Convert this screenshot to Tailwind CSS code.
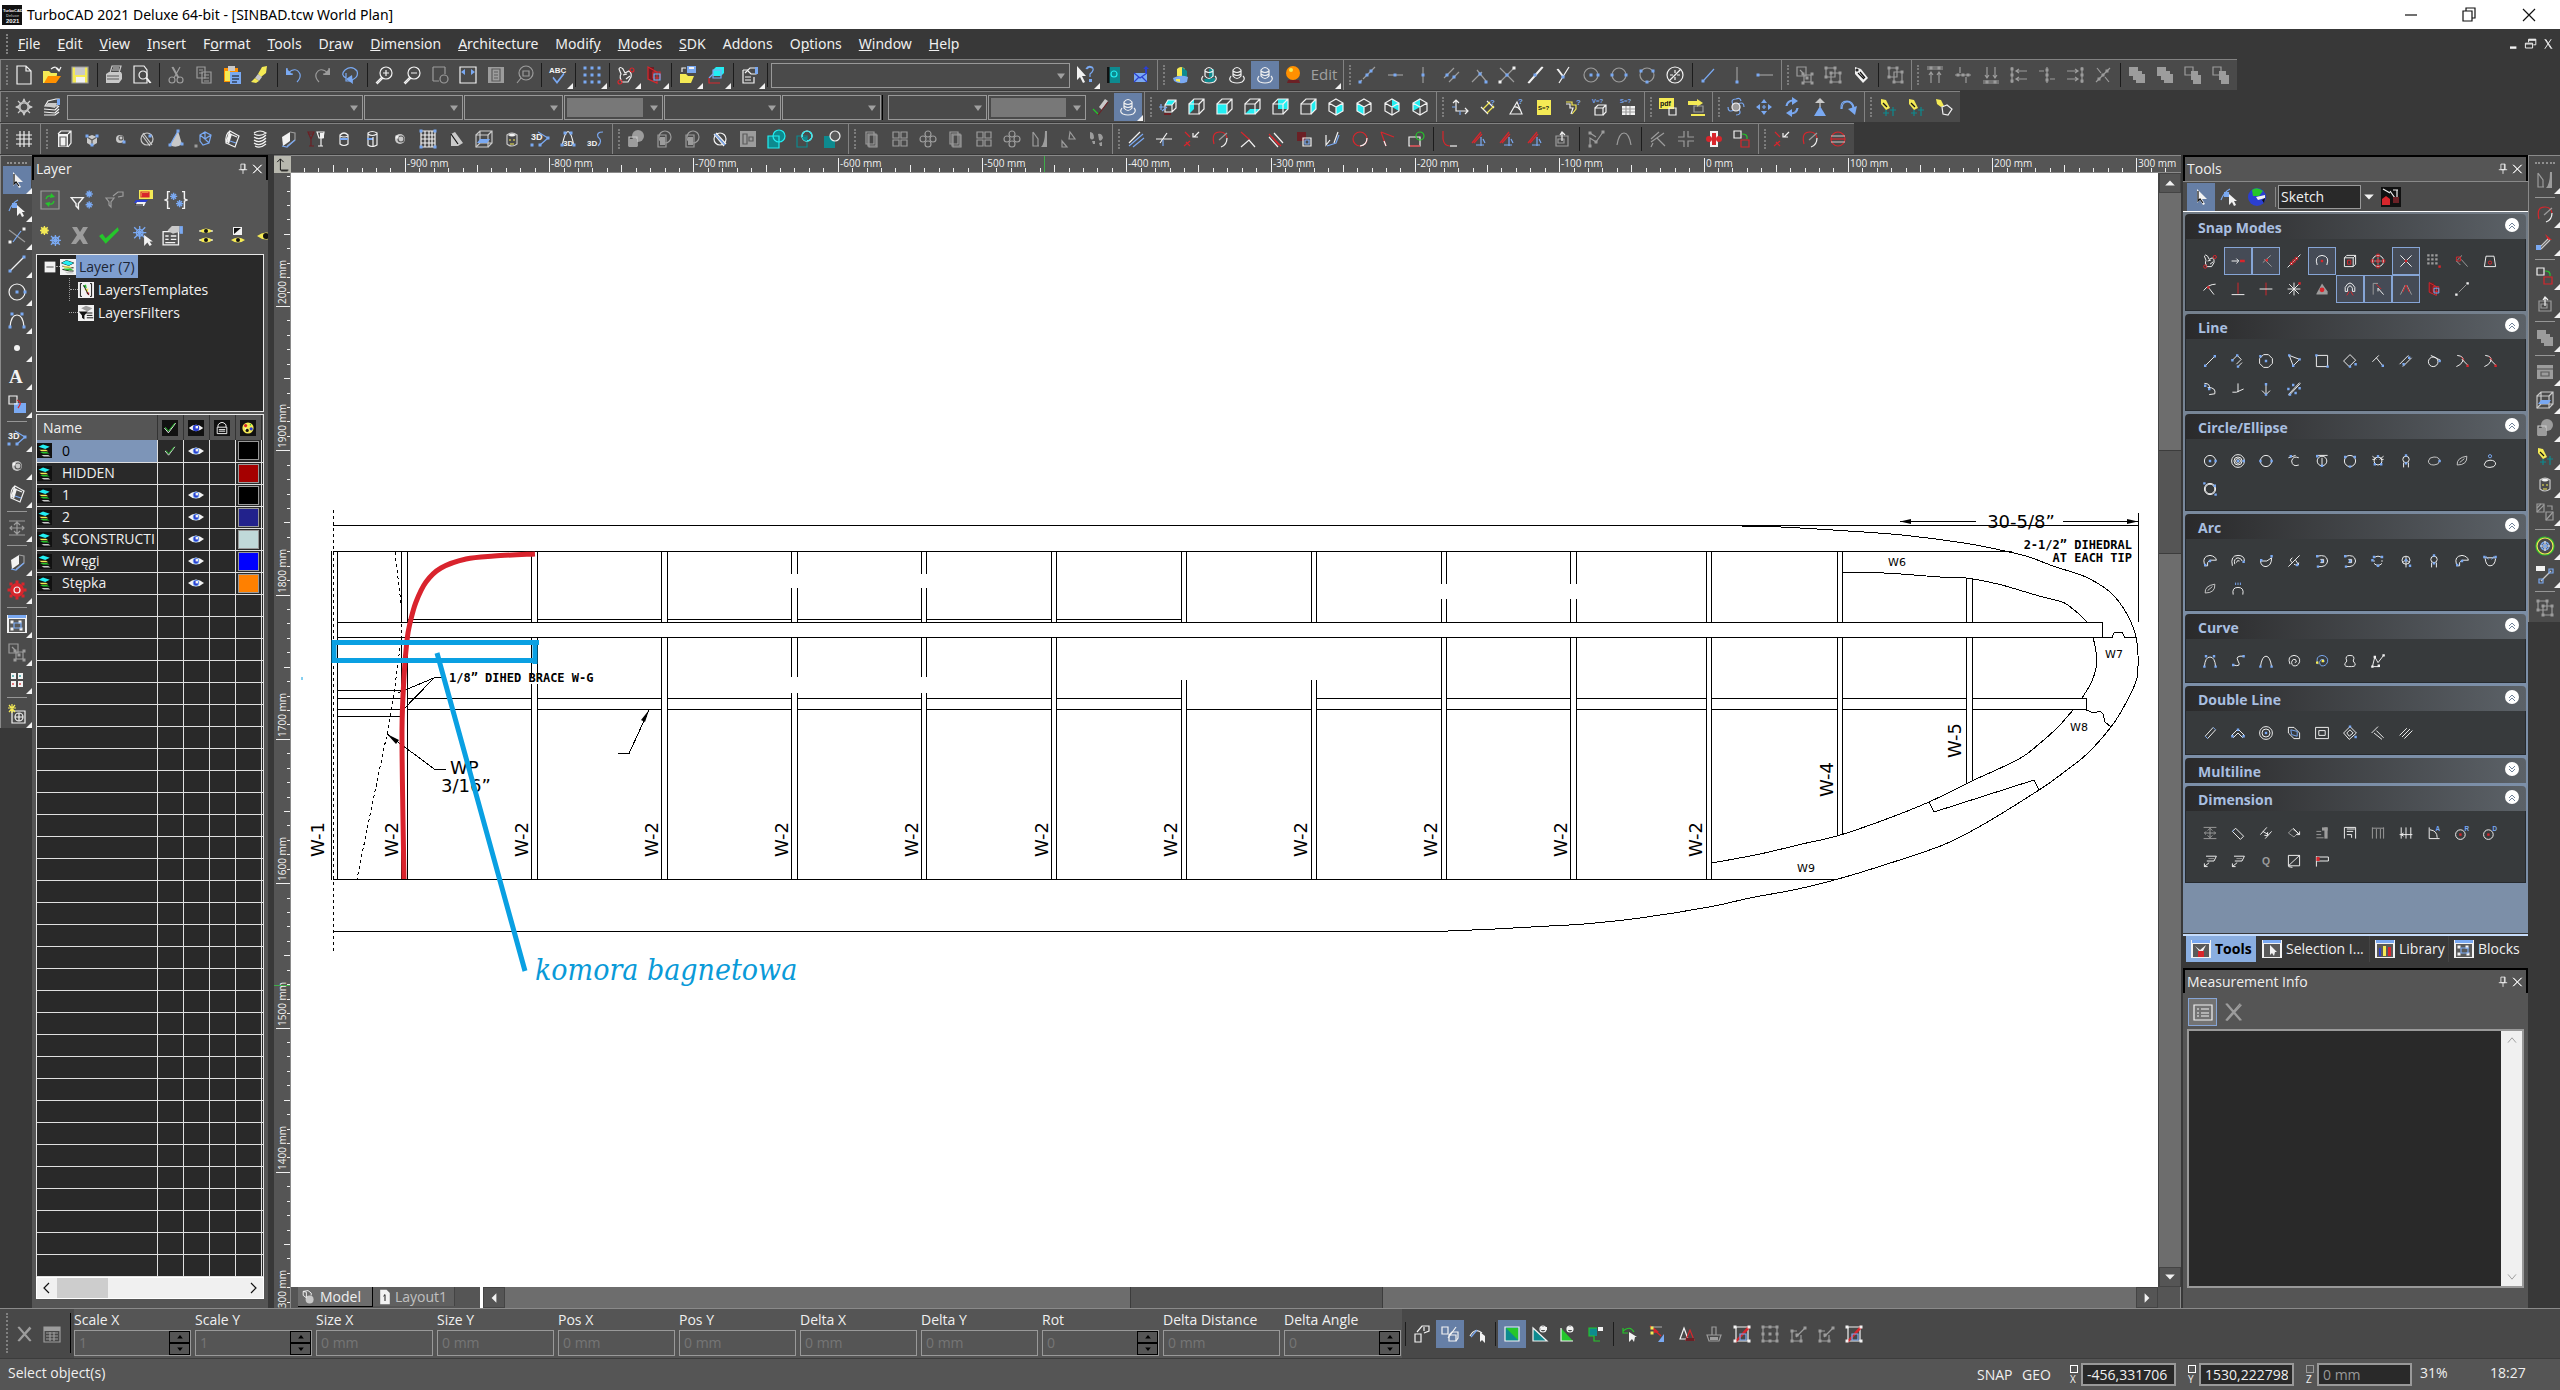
<!DOCTYPE html>
<html lang="en">
  <head>
    <meta charset="UTF-8" />
    <meta name="viewport" content="width=device-width, initial-scale=1.0" />
    <title>TurboCAD 2021 Deluxe 64-bit - [SINBAD.tcw World Plan]</title>
    <script src="https://cdn.jsdelivr.net/npm/@tailwindcss/browser@4"></script>
  </head>
  <body
    class="flex h-screen flex-col overflow-hidden bg-[#383838] font-['Open_Sans','Noto_Sans',sans-serif] text-sm text-[#f0f0f0]"
  >
    <!-- Title bar -->
    <header class="flex h-[29px] shrink-0 items-center bg-white pl-0.5 text-black">
      <svg data-icon="app" viewBox="0 0 20 20" class="size-5"></svg>
      <h1 class="pl-[5px] font-['Noto_Sans',sans-serif] text-[14px]">TurboCAD 2021 Deluxe 64-bit - [SINBAD.tcw World Plan]</h1>
      <div class="ml-auto flex">
        <button aria-label="Minimize" class="flex w-[58px] justify-center"><svg data-icon="wmin" viewBox="0 0 20 20" class="size-5"></svg></button>
        <button aria-label="Restore" class="flex w-[58px] justify-center"><svg data-icon="wres" viewBox="0 0 20 20" class="size-5"></svg></button>
        <button aria-label="Close" class="flex w-[62px] justify-center"><svg data-icon="wclose" viewBox="0 0 20 20" class="size-5"></svg></button>
      </div>
    </header>

    <!-- Menu -->
    <nav class="flex h-[30px] shrink-0 items-center">
      <span class="ml-1.5 mr-2.5 h-5 border-l-2 border-dotted border-[#808080]"></span>
      <div id="menu" class="flex gap-[17px] font-['Noto_Sans',sans-serif] text-[14px]">
        <button><u>F</u>ile</button>
        <button><u>E</u>dit</button>
        <button><u>V</u>iew</button>
        <button><u>I</u>nsert</button>
        <button>F<u>o</u>rmat</button>
        <button><u>T</u>ools</button>
        <button>D<u>r</u>aw</button>
        <button><u>D</u>imension</button>
        <button><u>A</u>rchitecture</button>
        <button>Modif<u>y</u></button>
        <button><u>M</u>odes</button>
        <button><u>S</u>DK</button>
        <button>Addons</button>
        <button>O<u>p</u>tions</button>
        <button><u>W</u>indow</button>
        <button><u>H</u>elp</button>
      </div>
      <div class="ml-auto flex gap-px pr-1">
        <button aria-label="Minimize drawing"><svg data-icon="mmin" viewBox="0 0 20 20" class="size-4"></svg></button>
        <button aria-label="Restore drawing"><svg data-icon="mres" viewBox="0 0 20 20" class="size-4"></svg></button>
        <button aria-label="Close drawing"><svg data-icon="mclose" viewBox="0 0 20 20" class="size-4"></svg></button>
      </div>
    </nav>

    <!-- Toolbars -->
    <div class="flex h-8 shrink-0">
      <div data-bar>
        <div data-icons="new open save | print preview | cut copy paste brush | undo redo rot | zin zout zwin ext page zprint | abc^ | snapgrid^ | hand^ redcube^ | fobj^ fcube^ | props^ |"></div>
        <div data-combo="Selection" class="relative mx-px h-[25px] w-[299px]"></div>
        <div data-icons="help^ book mail"></div>
      </div>
      <div data-bar>
        <div data-icons="shadeY shadeT shadeW shadeW! ball"></div>
        <button class="relative h-7 w-[34px] text-[15px] text-[#a0a0a0]">
          Edit<svg data-icon="fly" viewBox="0 0 20 20" class="absolute right-0 bottom-0 size-1.5"></svg>
        </button>
      </div>
      <div data-bar><div data-icons="sEnd sHor sVer sPar sPerp sInt sMid sNear sCen sQuad sTan sNone | sA sB sC"></div></div>
      <div data-bar><div data-icons="grp ungrp tag | selgrp"></div></div>
      <div data-bar><div data-icons="alT alM alB alL alC alR alD | ord1 ord1 ord2 ord2"></div></div>
    </div>
    <div class="flex h-8 shrink-0">
      <div data-bar>
        <div data-icons="gear layers"></div>
        <div class="flex gap-px pl-px">
          <div data-combo="Layer" class="relative h-[25px] w-[296px]"></div>
          <div data-combo="Style" class="relative h-[25px] w-[99px]"></div>
          <div data-combo="Font" class="relative h-[25px] w-[99px]"></div>
          <div data-combo="Color" data-fill class="relative h-[25px] w-[99px]"></div>
          <div data-combo="Pattern" class="relative h-[25px] w-[117px]"></div>
          <div data-combo="Width" class="relative h-[25px] w-[99px]"></div>
          <span class="w-[5px] border-l border-black"></span>
          <div data-combo="Brush" class="relative h-[25px] w-[99px]"></div>
          <div data-combo="Brush color" data-fill class="relative h-[25px] w-[98px]"></div>
        </div>
        <div data-icons="pen shadeW!^"></div>
      </div>
      <div data-bar><div data-icons="vAxis vLeft vFront vBot vBack vRight iso1 iso2 iso3 iso4"></div></div>
      <div data-bar><div data-icons="mCoord mLen mAng mArea mPath mVol mSurf"></div></div>
      <div data-bar><div data-icons="pdf pdf2"></div></div>
      <div data-bar><div data-icons="orbit pan spin cone turn"></div></div>
      <div data-bar><div data-icons="tagY tagY tagZ"></div></div>
    </div>
    <div class="flex h-8 shrink-0">
      <div data-bar><div data-icons="hash"></div></div>
      <div data-bar><div data-icons="box pbox sphere disk conic poly tube spring slab glass cyl cylt ball3 mesh wedge wcube face t3d t3a t3s"></div></div>
      <div data-bar><div data-icons="un1 un2 un2 slice blank bAdd bInt bSub"></div></div>
      <div data-bar><div data-icons="cp1 cp2 cp3 cp1 cp2 cp3 mir tri feet"></div></div>
      <div data-bar><div data-icons="e1 e2 e3 e4 e5 e6 e7 e8 e9 e10 e11 | e12 e13 e13 e13 e14 | e15 e16 | e17 e18 e19 e20"></div></div>
      <div data-bar><div data-icons="e3 e4 e21"></div></div>
    </div>

    <main class="flex min-h-0 flex-1">
      <!-- Drawing tools -->
      <div class="flex w-8 shrink-0 flex-col items-center self-start border-l border-t border-[#8a8a8a] bg-[#4b4b4b] pt-1.5">
        <span class="mb-0.5 w-5 border-t-2 border-dotted border-[#909090]"></span>
        <div data-icons="sel!^ node^ tInt^ tLine^ tCirc^ tCurve^ tDot^ tText^ tObj^ | t3d^ ball3^ tube^ | tDim^ | slab^ redgear^ | selwin^ grp^ tiles^ | newvp^" data-vertical></div>
      </div>

      <!-- Layer panel -->
      <aside class="mr-1.5 flex w-[236px] shrink-0 flex-col bg-[#555]">
        <div class="flex h-[25px] shrink-0 items-center border-2 border-b-0 border-black px-0.5">
          <h2>Layer</h2>
          <button aria-label="Pin" class="ml-auto"><svg data-icon="pin" viewBox="0 0 20 20" class="size-3.5"></svg></button>
          <button aria-label="Close panel"><svg data-icon="px" viewBox="0 0 20 20" class="size-3.5"></svg></button>
        </div>
        <div class="flex h-[39px] shrink-0 items-center gap-2.5 pl-2">
          <button aria-label="Refresh"><svg data-icon="lRef" viewBox="0 0 20 20" class="size-5"></svg></button>
          <button aria-label="New filter"><svg data-icon="lFil" viewBox="0 0 20 20" class="size-6"></svg></button>
          <button aria-label="Edit filter"><svg data-icon="lFilG" viewBox="0 0 20 20" class="size-5"></svg></button>
          <button aria-label="Layer stack"><svg data-icon="lStack" viewBox="0 0 20 20" class="size-5"></svg></button>
          <button aria-label="Template"><svg data-icon="lTpl" viewBox="0 0 20 20" class="size-6"></svg></button>
        </div>
        <div class="mb-px flex h-[34px] shrink-0 items-center gap-2 overflow-hidden pl-2">
          <button class="shrink-0" aria-label="New layer"><svg data-icon="lNew" viewBox="0 0 20 20" class="size-[22px]"></svg></button>
          <button class="shrink-0" aria-label="Delete layer"><svg data-icon="lDel" viewBox="0 0 20 20" class="size-5"></svg></button>
          <button class="shrink-0" aria-label="Set active"><svg data-icon="lOk" viewBox="0 0 20 20" class="size-[22px]"></svg></button>
          <button class="ml-1 shrink-0" aria-label="Select by layer"><svg data-icon="lSel" viewBox="0 0 20 20" class="size-[22px]"></svg></button>
          <button class="shrink-0" aria-label="Layer properties"><svg data-icon="lProp" viewBox="0 0 20 20" class="size-[22px]"></svg></button>
          <button class="ml-1 shrink-0" aria-label="Show all"><svg data-icon="lEye2" viewBox="0 0 20 20" class="size-5"></svg></button>
          <button class="ml-1 shrink-0" aria-label="Invert"><svg data-icon="lEyeB" viewBox="0 0 20 20" class="size-5"></svg></button>
          <button class="shrink-0" aria-label="Hide"><svg data-icon="lEye1" viewBox="0 0 20 20" class="size-5"></svg></button>
        </div>
        <div class="mx-1 h-[158px] shrink-0 border border-[#e8e8e8] bg-[#292929]">
          <ul class="leading-[23px]">
            <li class="flex items-center pl-[7px]">
              <svg data-icon="minus" viewBox="0 0 20 20" class="size-3"></svg>
              <span class="w-1 border-t border-dotted border-[#aaa]"></span>
              <svg data-icon="stackW" viewBox="0 0 20 20" class="size-4"></svg>
              <span class="bg-[#7f9fd0] px-[3px] text-[#1d2635]">Layer (7)</span>
            </li>
            <li class="ml-8 flex items-center border-l border-dotted border-[#999]">
              <span class="w-2 border-t border-dotted border-[#aaa]"></span>
              <svg data-icon="tplW" viewBox="0 0 20 20" class="size-4"></svg><span class="pl-1">LayersTemplates</span>
            </li>
            <li class="ml-8 flex items-center">
              <span class="w-[9px] border-t border-dotted border-[#aaa]"></span>
              <svg data-icon="filW" viewBox="0 0 20 20" class="size-4"></svg><span class="pl-1">LayersFilters</span>
            </li>
          </ul>
        </div>
        <div class="mx-1 mt-0.5 flex min-h-0 flex-1 flex-col overflow-hidden border border-b-0 border-[#e8e8e8] bg-[#292929]">
          <table class="w-full table-fixed border-collapse">
            <thead>
              <tr class="h-[25px] bg-[#555]">
                <th class="w-[120px] border-r border-[#333] pl-1.5 text-left font-normal">Name</th>
                <th class="w-[26px] border-r border-[#333]"><svg data-icon="cCheck" viewBox="0 0 20 20" class="mx-auto size-4"></svg></th>
                <th class="w-[26px] border-r border-[#333]"><svg data-icon="cEye" viewBox="0 0 20 20" class="mx-auto size-4"></svg></th>
                <th class="w-[26px] border-r border-[#333]"><svg data-icon="cLock" viewBox="0 0 20 20" class="mx-auto size-4"></svg></th>
                <th class="w-[26px] border-r border-[#333]"><svg data-icon="cPal" viewBox="0 0 20 20" class="mx-auto size-4"></svg></th>
                <th></th>
              </tr>
            </thead>
            <tbody id="layers"></tbody>
          </table>
        </div>
        <div class="mx-1 mb-[9px] flex h-[22px] shrink-0 items-center border border-white bg-[#f0f0f0]">
          <button aria-label="Scroll left"><svg data-icon="chevL" viewBox="0 0 20 20" class="size-5"></svg></button>
          <span class="h-full w-[51px] bg-[#cdcdcd]"></span>
          <button aria-label="Scroll right" class="ml-auto"><svg data-icon="chevR" viewBox="0 0 20 20" class="size-5"></svg></button>
        </div>
      </aside>

      <!-- Drawing window -->
      <section class="mr-0.5 grid min-w-0 flex-1 grid-cols-[17px_minmax(0,1fr)_23px] grid-rows-[18px_minmax(0,1fr)_21px]">
        <div class="border-t border-[#777] bg-[#b8b8ae]"><svg data-icon="origin" viewBox="0 0 20 20" class="h-[17px] w-4"></svg></div>
        <svg id="rulerTop" class="col-span-2 h-full w-full border-t border-b border-t-[#8a8a8a] border-b-[#8a8a8a] bg-[#555] font-['Open_Sans',sans-serif] text-[10px]"></svg>
        <svg id="rulerLeft" class="row-span-2 h-full w-full border-r border-[#8a8a8a] bg-[#555] font-['Open_Sans',sans-serif] text-[10px]"></svg>
        <svg class="h-full w-full bg-white font-['DejaVu_Sans',sans-serif]">
          <g transform="translate(-291 -173)">
            <g fill="none" stroke="#000" shape-rendering="crispEdges">
              <!-- outline -->
              <path d="M333 525.5H2138M333 551.5H2012M333 879.5H1838M333 931.5H1448M331.5 551V880M337.5 551V880" />
              <path d="M333.5 510V952" stroke-dasharray="3 3" />
              <!-- spars -->
              <path d="M337 622.5H2102.5V637.5M337 637.5H2112L2114 633L2116 632H2122L2125 637.5H2136" />
              <path d="M407 619.5H532M537 619.5H661M667 619.5H791M797 619.5H921M926 619.5H1051M1057 619.5H1181" />
              <path d="M337 690.5H402M337 716.5H402M337 698.5H402M407 698.5H532M537 698.5H661M667 698.5H791M797 698.5H921M926 698.5H1051M1057 698.5H1181M1317 698.5H1441M1447 698.5H1570M1577 698.5H1706M1712 698.5H1837M1842 698.5H1966M1972 698.5H2086.5V709.5" />
              <path d="M337 709.5H402M407 709.5H532M537 709.5H661M667 709.5H791M797 709.5H921M926 709.5H1051M1057 709.5H1181M1187 709.5H1311M1317 709.5H1441M1447 709.5H1570M1577 709.5H1706M1712 709.5H1837M1842 709.5H1966M1972 709.5H2086" />
              <!-- ribs -->
              <path d="M401.5 551V622M407.5 551V622M401.5 637V880M407.5 637V880M531.5 551V622M537.5 551V622M531.5 637V677M537.5 637V677M531.5 684V880M537.5 684V880M661.5 551V622M667.5 551V622M661.5 637V880M667.5 637V880" />
              <path d="M791.5 551V574M797.5 551V574M791.5 588V622M797.5 588V622M791.5 637V677M797.5 637V677M791.5 693V880M797.5 693V880M921.5 551V574M926.5 551V574M921.5 588V622M926.5 588V622M921.5 637V677M926.5 637V677M921.5 693V880M926.5 693V880" />
              <path d="M1051.5 551V622M1056.5 551V622M1051.5 637V880M1056.5 637V880M1181.5 551V622M1186.5 551V622M1181.5 680V880M1186.5 680V880M1311.5 551V622M1316.5 551V622M1311.5 680V880M1316.5 680V880" />
              <path d="M1441.5 551V584M1446.5 551V584M1441.5 599V622M1446.5 599V622M1441.5 637V880M1446.5 637V880M1570.5 551V584M1576.5 551V584M1570.5 599V622M1576.5 599V622M1570.5 637V880M1576.5 637V880" />
              <path d="M1706.5 551V622M1711.5 551V622M1706.5 637V880M1711.5 637V880M1837.5 551V622M1842.5 551V622M1837.5 637V836M1842.5 637V834M1966.5 578V622M1972.5 579V622M1966.5 637V784M1972.5 637V781" />
              <!-- tip -->
              <path data-curve="1741,526 1781,527 1848,531 1902,535 1964,543 2005,551 2029,557 2053,566 2075,573 2088,578 2105,588 2115,597 2124,609 2131,622 2136,637 2138,655 2137,678 2131,693 2122,710 2111,727 2088,753 2063,773 2039,790 1984,824 1943,845 1881,866 1838,879 1798,889 1750,898 1709,907 1640,918 1584,924 1549,926 1495,929 1448,931" />
              <path data-curve="1842,573 1884,573 1940,577 1966,578 1998,584 2039,596 2062,602 2069,606 2079,614 2087,622" />
              <path data-curve="2093,637 2096,652 2096,668 2091,683 2082,698" />
              <path data-curve="2073,710 2058,727 2039,744 2019,759 1972,781 1929,802 1884,820 1837,836 1802,844 1760,854 1712,863" />
              <path d="M2086 710L2094 713L2100 711L2103 714L2105 722L2111 727M1929 802L1934 812L2034 780L2039 790" />
              <!-- dimension and leaders -->
              <path d="M2138.5 513V622M1900 521.5H1976M2063 521.5H2138" />
              <path d="M387 734L435 769.5H446M398 693L435 677.5H444M400 713L435 677M649 710L629 753.5H618" />
              <path d="M395 552L401 604V640L394 694L387 734L369 820L357 879" stroke-dasharray="3 3" />
            </g>
            <path d="M1900 521.5L1911 519V524ZM2138 521.5L2127 519V524ZM387 734L399 740L396 744ZM649 710L645 722L641 720Z" />
            <g font-size="18">
              <text x="2021" y="528" text-anchor="middle">30-5/8”</text>
              <text x="450" y="774">WP</text>
              <text x="441" y="792">3/16”</text>
              <text transform="translate(324 857) rotate(-90)">W-1</text>
              <text transform="translate(398 857) rotate(-90)">W-2</text>
              <text transform="translate(528 857) rotate(-90)">W-2</text>
              <text transform="translate(658 857) rotate(-90)">W-2</text>
              <text transform="translate(788 857) rotate(-90)">W-2</text>
              <text transform="translate(918 857) rotate(-90)">W-2</text>
              <text transform="translate(1048 857) rotate(-90)">W-2</text>
              <text transform="translate(1177 857) rotate(-90)">W-2</text>
              <text transform="translate(1307 857) rotate(-90)">W-2</text>
              <text transform="translate(1437 857) rotate(-90)">W-2</text>
              <text transform="translate(1567 857) rotate(-90)">W-2</text>
              <text transform="translate(1702 857) rotate(-90)">W-2</text>
              <text transform="translate(1833 797) rotate(-90)">W-4</text>
              <text transform="translate(1961 758) rotate(-90)">W-5</text>
            </g>
            <g font-size="11">
              <text x="1888" y="566">W6</text>
              <text x="2105" y="658">W7</text>
              <text x="2070" y="731">W8</text>
              <text x="1797" y="872">W9</text>
            </g>
            <g font-size="12" font-weight="bold" class="font-['DejaVu_Sans_Mono',monospace]">
              <text x="449" y="682">1/8” DIHED BRACE W-G</text>
              <text x="2132" y="549" text-anchor="end">2-1/2” DIHEDRAL</text>
              <text x="2132" y="562" text-anchor="end">AT EACH TIP</text>
            </g>
            <!-- hand-drawn notes -->
            <path data-curve="404,879 403,820 402,730 404,677 407,640 410,623 416,602 426,582 441,568 466,559 494,556 535,554" fill="none" stroke="#d9232d" stroke-width="5" />
            <path d="M334 640V663M332 642.5H539M332 660.5H537M535 642V664M437 653L525 971" fill="none" stroke="#0aa0e2" stroke-width="5" />
            <path d="M302 677V680" stroke="#0aa0e2" />
            <text x="535" y="980" font-size="30" font-style="italic" fill="#0a9ad8" class="font-['DejaVu_Serif_Condensed','DejaVu_Serif',serif]">komora bagnetowa</text>
          </g>
        </svg>
        <div class="flex flex-col border-l border-[#444] bg-[#6d6d6d]">
          <button aria-label="Scroll up" class="flex h-5 items-center justify-center border border-[#444] bg-[#555]"><svg data-icon="triU" viewBox="0 0 20 20" class="size-4"></svg></button>
          <span class="grow-[257]"></span>
          <span class="grow-[102] border-y border-[#3c3c3c] bg-[#555]"></span>
          <span class="grow-[714]"></span>
          <button aria-label="Scroll down" class="flex h-5 items-center justify-center border border-[#444] bg-[#555]"><svg data-icon="triD" viewBox="0 0 20 20" class="size-4"></svg></button>
        </div>
        <div class="flex bg-[#6d6d6d]">
          <div role="tablist" class="flex w-[192px] shrink-0 items-start border-r-[3px] border-white bg-[#555] pl-[7px]">
            <button role="tab" class="flex h-5 w-[75px] items-center gap-1 border-b border-r border-black bg-[#6d6d6d] pl-0.5"><svg data-icon="mdl" viewBox="0 0 20 20" class="size-4"></svg>Model</button>
            <button role="tab" class="flex h-[19px] w-[82px] items-center gap-0.5 border-r border-[#444] bg-[#606060] pl-1 text-[#c0c0c0]"><svg data-icon="lay" viewBox="0 0 20 20" class="size-4"></svg>Layout1</button>
          </div>
          <button aria-label="Scroll left" class="flex w-[22px] items-center justify-center border border-[#444] bg-[#555]"><svg data-icon="triL" viewBox="0 0 20 20" class="size-4"></svg></button>
          <span class="grow-[626]"></span>
          <span class="grow-[252] border-x border-[#3c3c3c] bg-[#555]"></span>
          <span class="grow-[754]"></span>
          <button aria-label="Scroll right" class="flex w-[22px] items-center justify-center border border-[#444] bg-[#555]"><svg data-icon="triR" viewBox="0 0 20 20" class="size-4"></svg></button>
        </div>
        <div class="border-r border-[#8a8a8a] bg-[#555]"></div>
      </section>

      <!-- Tool palette -->
      <aside class="flex w-[345px] shrink-0 flex-col">
        <div class="flex h-[26px] shrink-0 items-center border-2 border-b-0 border-black bg-[#555] px-0.5">
          <h2>Tools</h2>
          <button aria-label="Pin" class="ml-auto"><svg data-icon="pin" viewBox="0 0 20 20" class="size-3.5"></svg></button>
          <button aria-label="Close panel"><svg data-icon="px" viewBox="0 0 20 20" class="size-3.5"></svg></button>
        </div>
        <div class="flex h-[31px] shrink-0 items-center border-t border-b border-t-[#8a8a8a] border-b-white bg-[#4b4b4b] pl-1">
          <div data-icons="sel! node globe"></div>
          <span class="mr-0.5 ml-1 h-5 border-l border-[#888]"></span>
          <select id="palette" aria-label="Palette" class="h-6 w-[83px] appearance-none border border-[#999] bg-[#292929] px-0.5">
            <option>Sketch</option>
          </select>
          <svg data-icon="triD" viewBox="0 0 20 20" class="size-4"></svg>
          <button aria-label="Customize" class="ml-[3px]"><svg data-icon="swiss" viewBox="0 0 20 20" class="h-5 w-[22px]"></svg></button>
        </div>
        <div id="palettes" class="flex flex-col gap-[3px] bg-linear-to-b from-[#727b85] to-[#7c8fa8] to-60% px-0.5 pt-0.5 pb-[50px]">
          <section data-title="Snap Modes" data-tools="hand pEnd! pMid! pDiv pArc! pBox pQuad pX! pGrid pNear pFace pTan pPerp pCross pStar pTri pMag! pExt! pApp! redcube pDash"></section>
          <section data-title="Line" data-tools="l1 l2 l3 l4 l5 l6 l7 l8 l9 l10 l10 l12 l13 l14 l15"></section>
          <section data-title="Circle/Ellipse" data-tools="c1 c2 c3 c4 c5 c6 c7 c8 c9 c10 c11 c12"></section>
          <section data-title="Arc" data-tools="a1 a2 a3 a4 a5 a5 a7 a8 c8 a1 a11 c10 a13"></section>
          <section data-title="Curve" data-tools="tCurve u2 u3 u4 u5 u6 u7"></section>
          <section data-title="Double Line" data-tools="d1 d2 d3 d4 d5 d6 d7 d8"></section>
          <section data-title="Multiline" data-tools=""></section>
          <section data-title="Dimension" data-tools="tDim m2 m3 m4 m5 m6 m7 m8 m9 m10 m11 m12 m12 m14 m15 m16"></section>
        </div>
        <div role="tablist" class="mt-px flex h-[34px] shrink-0 items-start border-t-2 border-[#c6dcfa] pl-[3px]">
          <button role="tab" class="flex h-[26px] w-[70px] items-center gap-1 bg-[#8aaee0] pl-[5px] font-bold text-black"><svg data-icon="tabT" viewBox="0 0 20 20" class="size-5"></svg>Tools</button>
          <button role="tab" class="flex h-[26px] w-[114px] items-center gap-1 border-r border-[#444] pl-1.5"><svg data-icon="tabS" viewBox="0 0 20 20" class="size-5"></svg>Selection I...</button>
          <button role="tab" class="flex h-[26px] w-[79px] items-center gap-1 border-r border-[#444] pl-[5px]"><svg data-icon="tabL" viewBox="0 0 20 20" class="size-5"></svg>Library</button>
          <button role="tab" class="flex h-[26px] items-center gap-1 pl-[5px]"><svg data-icon="selwin" viewBox="0 0 20 20" class="size-5"></svg>Blocks</button>
        </div>
        <div class="flex min-h-0 flex-1 flex-col bg-[#555]">
          <div class="flex h-[25px] shrink-0 items-center border-2 border-b-0 border-black px-0.5">
            <h2>Measurement Info</h2>
            <button aria-label="Pin" class="ml-auto"><svg data-icon="pin" viewBox="0 0 20 20" class="size-3.5"></svg></button>
            <button aria-label="Close panel"><svg data-icon="px" viewBox="0 0 20 20" class="size-3.5"></svg></button>
          </div>
          <div class="flex h-9 shrink-0 items-center gap-1 pl-[5px] pt-0.5">
            <button aria-label="List" class="flex h-7 w-[29px] items-center justify-center border border-[#86a5d6] bg-[#737373]"><svg data-icon="list" viewBox="0 0 20 20" class="size-5"></svg></button>
            <button aria-label="Clear"><svg data-icon="xg" viewBox="0 0 20 20" class="size-6"></svg></button>
          </div>
          <div class="mx-1 mb-5 flex min-h-0 flex-1 border-2 border-[#999] bg-[#292929]">
            <div class="ml-auto flex w-[21px] flex-col items-center justify-between bg-[#f0f0f0] py-0.5">
              <svg data-icon="chevU" viewBox="0 0 20 20" class="size-4"></svg>
              <svg data-icon="chevD" viewBox="0 0 20 20" class="size-4"></svg>
            </div>
          </div>
        </div>
      </aside>

      <!-- Right toolbar -->
      <div class="flex w-8 shrink-0 flex-col items-center self-start border-l border-t border-[#8a8a8a] bg-[#4b4b4b] pt-1.5">
        <span class="mb-0.5 w-5 border-t-2 border-dotted border-[#909090]"></span>
        <div data-icons="mir^ | e4^ rScale^ | e20^ e14^ | ord1^ | rWin^ wcube^ un1^ tagY^ face^ rHatch^ | target^ rPts^ | ungrp" data-vertical></div>
      </div>
    </main>

    <!-- Inspector bar -->
    <div class="flex h-[51px] shrink-0 border-t border-b border-t-[#8a8a8a] border-b-[#3c3c3c] bg-[#484848]">
      <span class="ml-1.5 mt-1 h-10 border-l-2 border-dotted border-[#808080]"></span>
      <div class="flex items-center pl-0.5"><div data-icons="xg tbl"></div></div>
      <span class="ml-1 mr-[3px] mt-1 h-10 border-l border-black"></span>
      <div id="fields" class="flex gap-1 bg-[#555] pr-px pt-px"></div>
      <div class="flex items-center"><div data-icons="| i1 i2! i3 | i4! i5 i6 i7 | i8 i9 i10 i11 i12 i13 i14 i14 i12"></div></div>
    </div>

    <!-- Status bar -->
    <footer class="flex h-[31px] shrink-0 items-center bg-[#555] pl-2">
      <span class="pb-1">Select object(s)</span>
      <div class="ml-auto flex items-center">
        <span class="w-[45px]">SNAP</span><span class="w-12">GEO</span>
        <span class="flex w-[11px] flex-col items-start text-[10px] leading-3"><input type="checkbox" aria-label="Lock X" class="size-2 appearance-none border border-white" /><label for="px">X</label></span>
        <input id="px" value="-456,331706" class="h-[23px] w-[95px] border-2 border-[#999] bg-[#292929] px-1" />
        <span class="ml-3 flex w-[11px] flex-col items-start text-[10px] leading-3"><input type="checkbox" aria-label="Lock Y" class="size-2 appearance-none border border-white" /><label for="py">Y</label></span>
        <input id="py" value="1530,222798" class="h-[23px] w-[95px] border-2 border-[#999] bg-[#292929] px-1" />
        <span class="ml-3 flex w-[11px] flex-col items-start text-[10px] leading-3"><input type="checkbox" aria-label="Lock Z" disabled class="size-2 appearance-none border border-[#999]" /><label for="pz">Z</label></span>
        <input id="pz" value="0 mm" disabled class="h-[23px] w-[95px] border-2 border-[#999] bg-[#292929] px-1 text-[#999]" />
        <span class="w-[78px] pb-1 pl-2">31%</span>
        <span class="w-[70px] pb-1">18:27</span>
      </div>
    </footer>

    <script>
      // Icon strings: "<colour>:<path>" parts joined by ";". A capital colour fills, a small one strokes.
      // @x,y,r is a circle, #x,y,w,h a rectangle, *x,y a grip point; "<colour>~x,y,size,text" is a label.
      const COLORS = { w: "#f2f2f2", b: "#7aa9f2", r: "#d8262c", g: "#9c9c9c", k: "#111111", y: "#f4ea55", t: "#0d8a8f", c: "#22eef2", n: "#25c62b", o: "#ff9000", d: "#6b2025", s: "#c9c9c9", v: "#2b3fd0", e: "#5a5a5a" };
      const CUBE = "w:#3,7,10,10;w:M3 7L8 2H18V12L13 17M13 7L18 2";
      const HEX = "w:M10 2L17 6V14L10 18L3 14V6ZM3 6L10 10L17 6M10 10V18";
      const STACK = "C:M2 5L8 2L17 5L11 8Z;Y:M3 9H12L15 11H6Z;N:M4 12H13L17 14H8Z;S:M6 16H15L18 18H9Z";
      const ICONS = {
        app: "K:#0,0,20,20;w~1,7,4,TurboCAD;g~4,12,4,Deluxe;w~4,18,6,2021",
        wmin: "k:M4 10H16", wres: "k:#4,6,9,10;k:M7 6V3H16V13H13", wclose: "k:M4 4L16 16M16 4L4 16",
        mmin: "W:#5,13,8,3", mres: "w:#3,9,9,6;w:M3 10H12M7 8V4H16V11H13;W:#7,4,9,2", mclose: "w:M6 4L14 16M14 4L6 16M7 4L15 16",
        fly: "W:M20 0V20H0Z", pin: "w:M7 3H13V11H7ZM12 3V11M4 11H16M10 11V17", px: "w:M4 4L16 16M16 4L4 16M5 4L17 16M17 4L5 16",
        triU: "W:M4 13H16L10 7Z", triD: "W:M4 7H16L10 13Z", triL: "W:M13 4V16L7 10Z", triR: "W:M7 4V16L13 10Z",
        chevL: "k:M12 5L7 10L12 15", chevR: "k:M8 5L13 10L8 15", chevU: "g:M5 12L10 6L15 12", chevD: "g:M5 8L10 14L15 8",
        origin: "k:M8 17V3M4 7L8 3L12 7M8 17H18M9 18H17", minus: "W:#1,1,18,18;k:M4 10H16",
        new: "w:M3 1H12L17 6V19H3ZM12 1V6H17", open: "Y:M1 18V6H7L9 8H15V10L11 18Z;O:M2 18L6 11H19L14 18Z;w:M9 4Q14 0 17 5M14 3L17 6L19 2",
        save: "Y:#2,2,16,16;S:#5,2,10,8;W:#6,12,9,6;g:#2,2,16,16", print: "s:M6 8L8 1H17L15 8M9 3H15M8 5H15;S:M2 9L5 7H17L18 9V14L15 18H2Z;e:M3 11H15M3 14H15",
        preview: "w:M2 1H12L15 5V18H2Z;w:@11,10,4;w:M14 13L18 18M15 13L19 18", cut: "g:M6 2L12 13M14 2L8 13M7 2L13 13;g:@6,15,3;g:@14,15,3",
        copy: "g:#3,2,8,11;g:#8,7,9,11;g:M5 5H9M5 8H9M10 10H15M10 13H15M10 16H15", paste: "O:#2,3,14,14;S:#6,1,7,5;Y:#3,6,5,10;B:#8,7,11,12;k:M10 11H17M10 14H17M10 17H15",
        brush: "Y:M12 2L17 1L16 8L11 12L8 9Z;S:M8 9L12 12L9 16L5 13Z;Y:M1 17L5 13L9 16L6 18Z", undo: "b:M3 3V9H9M4 8Q12 1 16 9Q17 13 13 17;B:M2 3V10H9Z",
        redo: "g:M17 3V9H11M16 8Q8 1 4 9Q3 13 7 17;G:M18 3V10H11Z", rot: "b:M6 13Q0 10 5 5Q12 0 17 6Q19 12 12 15M6 8V16H13;B:M6 14L12 10L13 19Z",
        zin: "w:@12,8,6;w:M8 12L2 18M9 13L3 19M12 5V11M9 8H15", zout: "w:@12,8,6;w:M8 12L2 18M9 13L3 19M9 8H15",
        zwin: "g:M3 2H15M3 2V16M15 2V9M3 16H9;g:@14,14,4", ext: "w:#2,2,16,16;B:M3 7L7 4V10ZM17 7L13 4V10Z", page: "G:#2,2,16,16;e:#6,4,8,12;e:M8 7H12M8 10H12M8 13H12", zprint: "g:@12,8,7;g:#9,6,6,5;g:M7 13L3 18",
        abc: "w~1,8,8,ABC;b:M5 12L9 17L16 8M5 13L9 18L16 9", snapgrid: "B:*3,3*10,3*17,3*3,10*10,10*17,10*3,17*10,17*17,17",
        hand: "w:M6 17Q3 12 5 9L3 4Q4 1 7 4L9 8L13 6Q16 8 15 12L12 17ZM7 10L11 9M10 14L14 11;r:@16,5,2;r:@4,17,2", redcube: "D:#4,2,6,13;r:M4 2V14L13 18V7ZM9 7H16V13H9Z;b:#10,9,6,6",
        fobj: "Y:M2 18V9H8L10 11H16L13 18Z;B:#9,1,9,7;W:#11,2,5,2;w:M4 7V3H8", fcube: "C:M7 5L10 2H18V8L15 11H7Z;b:#7,5,8,8;b:M3 13L7 9;r:M3 13V18H14", props: "w:M3 5H8M3 5V18H14V12;w:M5 8L10 3L16 3V9L11 9L8 6M5 12H11M5 15H11;B:#15,2,3,7",
        help: "W:M2 1V15L5 12L8 18L10 17L7 11L11 11Z;b:M11 4Q13 0 17 2Q20 5 15 9V12M12 4Q14 1 17 3;B:#14,14,3,3", book: "K:#4,2,13,16;T:#6,2,11,16;c:@11,9,3;k:M6 2V18", mail: "B:#3,8,13,9;v:M3 8L9 13L16 8M3 17L8 12M16 17L11 12;V:M14 8V4H12L15 1L18 4H16V8Z",
        shadeW: "w:M6 5Q10 0 14 5V11Q10 16 6 11ZM6 6Q10 9 14 6M6 9Q10 12 14 9;w:M4 11Q1 15 5 17Q10 19 15 17Q19 14 16 11", shadeT: "T:#10,4,5,8;T:M5 14L16 13V17L6 17Z;w:M6 5Q10 0 14 5V11Q10 16 6 11ZM6 6Q10 9 14 6;w:M4 11Q1 15 5 17Q10 19 15 17Q19 14 16 11",
        shadeY: "Y:M6 4Q10 0 14 4V11H6Z;T:M11 2L16 6V12H11Z;B:M2 13Q10 9 17 12L16 17Q9 20 3 16Z;Y:M5 14H9V17L5 16Z", ball: "O:@10,8,7;D:M5 15L16 15L17 18H4Z;Y:@8,5,2",
        sEnd: "g:M6 14L18 2M3 17L5 15;B:*10,10*14,6*3,17", sHor: "g:M3 10H18;B:*10,10", sVer: "g:M10 2V18;B:*10,10", sPar: "g:M3 13L13 3M8 17L18 7;B:*6,10*13,12", sPerp: "g:M3 17L13 7M8 5L17 16;B:*11,9*17,17", sInt: "g:M3 3L17 17M17 3L3 17;B:*10,10;W:*3,17*17,3",
        sMid: "w:M3 18L17 2M4 18L18 2;B:*10,10", sNear: "w:M6 18L16 2M4 4L10 12M5 4L11 12;B:*10,12", sCen: "g:@10,10,7;B:*10,10*17,10", sQuad: "g:@10,10,7;B:*3,10*17,10", sTan: "g:@10,10,7;B:*4,6*16,6*10,17", sNone: "w:@10,10,8;w:M4 16L16 4M10 5V8M10 12V15M5 10H8M12 10H15",
        sA: "b:M5 15L15 4;B:*4,16", sB: "g:M10 2V18;B:*10,17", sC: "g:M3 10H18;B:*3,10",
        grp: "g:#2,2,9,9;g:M5 5L8 8;g:#9,10,7,7;G:*8,9*17,9*8,18*17,18*12,13", ungrp: "g:#3,3,9,9;g:#8,8,9,9;G:*3,3*12,3*3,12*8,8*17,8*8,17*17,17", tag: "W:M4 2L10 4L17 13L12 18L4 9Z;k:M7 8L13 14M9 7L14 13;k:@6,5,1", selgrp: "g:#4,3,8,9;g:#9,7,8,10;G:*4,3*12,3*4,12*9,17*17,17*17,7",
        alT: "g:M2 2H18M2 4H18M6 18V8M14 18V8M4 10L6 7L8 10M12 10L14 7L16 10;G:*6,3*14,3", alM: "g:M2 10H18M7 2V8M13 12V18;G:*5,10*10,10*15,10", alB: "g:M2 18H18M2 16H18M6 2V12M14 2V12M4 10L6 13L8 10M12 10L14 13L16 10;G:*6,17*14,17",
        alL: "g:M3 2V18M18 6H8M18 14H8M10 4L7 6L10 8M10 12L7 14L10 16;G:*3,4*3,10*3,16", alC: "g:M10 2V18M2 6H7M13 14H18;G:*10,5*10,10*10,15", alR: "g:M17 2V18M2 6H12M2 14H12M10 4L13 6L10 8M10 12L13 14L10 16;G:*17,4*17,10*17,16", alD: "g:M3 17L17 3M4 3L8 8M16 17L12 12;G:*6,14*10,10*14,6",
        ord1: "G:#2,2,9,9;G:#6,6,9,9;G:#9,9,9,9", ord2: "g:#2,2,8,8;G:#8,6,7,9;G:#10,10,8,9",
        gear: "s:@10,10,5;s:M10 2V5M10 15V18M2 10H5M15 10H18M4 4L7 7M13 13L16 16M16 4L13 7M7 13L4 16;s:@10,10,4;S:M10 1L12 5H8ZM10 19L12 15H8ZM1 10L5 8V12ZM19 10L15 8V12Z", layers: "w:M3 9L6 4L14 2H17L15 9ZM2 12L13 13L17 9M2 15L13 16L17 12M2 18L13 18L17 15;S:M3 9L6 6H15L13 11Z;B:#15,2,3,6",
        pen: "S:M9 10L15 2L18 4L12 13Z;n:M3 12L8 17;d:M8 18L18 5",
        vAxis: "C:M10 3H18L14 8H7Z;w:M7 8L10 3H18V11L14 15H7ZM14 8V15M7 8H14L18 3;b:M1 10H6M3 7V13M4 14L9 10;D:#6,16,7,2", vLeft: "C:M3 7L8 2V12L3 17Z;" + CUBE, vFront: "C:#3,7,10,10;" + CUBE, vBot: "C:M3 17L8 12H18L13 17Z;" + CUBE, vBack: "C:#8,2,10,10;" + CUBE, vRight: "C:M13 7L18 2V12L13 17Z;" + CUBE,
        iso1: "C:M10 10L17 6V14L10 18Z;" + HEX, iso2: "C:M3 6L10 10V18L3 14Z;" + HEX, iso3: "C:M10 2L17 6V14L10 10Z;" + HEX, iso4: "C:M10 2L3 6V14L10 10Z;" + HEX,
        mCoord: "w:M6 3V14H18M15 11L18 14L15 17M3 6L6 3L9 6;b:M2 10H6M10 14V18", mLen: "w:M3 10L10 17M9 4L16 11;y:M5 12L12 5M9 16L16 9;b~12,8,8,?", mAng: "w:M4 17L11 5L16 17Z;w:M8 10Q12 9 14 13;b~12,7,8,?", mArea: "Y:#3,3,14,15;k~4,13,6,S=?", mPath: "y:M4 5H10V8H14V12L10 17;w:M4 7H8V11H11L9 17;b~14,8,8,?", mVol: "b~2,6,6,V=?;w:#5,11,8,7;w:M5 11L8 8H16V15L13 18M13 11L16 8", mSurf: "b~2,6,6,S=?;W:M4 9H17V18H4Z;g:M4 12H17M4 15H17M8 9V18M12 9V18",
        pdf: "Y:#1,1,15,11;k~2,9,7,pdf;w:#11,11,7,7", pdf2: "Y:M2 4H11V2L17 6L11 10V8H2Z;g:#8,9,9,6;Y:#5,17,14,2",
        orbit: "b:M10 2Q4 2 7 8M18 10Q18 4 12 7M10 18Q16 18 13 12M2 10Q2 16 8 13M10 2Q14 0 15 4;G:@10,10,4;w:@10,10,4", pan: "B:M10 2L13 6H7ZM10 18L13 14H7ZM2 10L6 7V13ZM18 10L14 7V13Z;b:M10 8V12M8 10H12", spin: "b:M4 9Q5 3 11 3M16 11Q15 17 9 17M5 9Q6 4 11 4M15 11Q14 16 9 16;B:M10 0L16 4L10 8ZM10 12L4 16L10 20Z", cone: "B:M10 9L16 19H4Z;S:M10 1L15 6H5Z;s:M10 5V10", turn: "b:M3 12Q2 4 9 4Q15 4 16 11M4 12Q4 5 9 5Q14 5 15 11;B:M10 12L19 9L17 18Z",
        tagY: "Y:M3 2L8 3L12 11L8 13L3 7Z;k:M5 6L9 10;t:M8 13V19M5 16H11M15 10V16M12 13H18M15 16V19", tagZ: "Y:M2 2L7 3L10 9L7 10L3 7Z;w:M8 10L13 8L18 12L14 18L9 17Z",
        hash: "w:M6 2V18M10 2V18M15 2V18M2 6H18M2 10H18M2 15H18", box: "W:#4,5,10,13;e:#6,8,6,9;w:M4 5L7 2H17V14L14 18M14 5L17 2", pbox: "S:M10 6L15 8V14L10 17L5 14V8Z;e:M5 8L10 11L15 8M10 11V17;B:*5,7*15,7*10,16", sphere: "S:@10,10,4;e:@11,9,2;B:*14,13", disk: "s:@9,10,6;s:M5 4L14 16M4 6L12 17;B:*12,7",
        conic: "S:M12 2L16 15Q10 20 4 16Z;b:M12 2L4 16;B:*12,2*4,16*16,15", poly: "b:M6 6L11 3L17 6L15 14L9 16L6 12ZM11 3V10M6 6L11 10L17 6M11 10L15 14;G:*2,17", tube: "w:M8 2L17 7L13 18L4 14ZM8 2Q3 5 4 14M8 5L15 8;W:M7 4L10 5L7 15L5 13Z;b:M8 12L14 14", spring: "w:M4 4Q10 0 16 4Q10 8 4 5M4 8Q10 12 16 6M4 11Q10 15 16 9M4 14Q10 18 16 12M5 17Q10 20 16 15",
        slab: "W:M4 8L12 3V12L5 17Z;g:M12 3L17 4V11L9 17;b:M4 17L9 18L17 11", glass: "d:M2 3H8L5 10ZM5 10V17M3 17H8M2 5H8;w:M11 3H18L17 9H13ZM15 9V17M12 17H17;W:#14,4,4,5", cyl: "w:M6 6Q10 2 14 6V15Q10 18 6 15Z;w:M6 7Q10 9 14 7;B:#6,9,8,2", cylt: "w:M6 4Q10 1 15 4V16Q10 19 6 16ZM6 5Q10 8 15 5;B:#5,9,6,2;w:M11 8V18", ball3: "S:@10,10,5;e:@11,10,3;W:*7,8", mesh: "w:#3,2,14,16;w:M3 6H17M3 10H17M3 14H17M7 2V18M11 2V18M14 2V18;B:*3,2*17,2*3,18*17,18",
        wedge: "S:M5 5L9 3L17 14L12 17H5Z;k:M5 5L12 15", wcube: "s:#2,6,12,12;s:M2 6L6 2H18V14L14 18M14 6L18 2M6 2V14H18M2 18L6 14;B:M3 14L6 10H16L13 14Z", face: "s:M5 6Q10 2 15 6V15Q10 19 5 15Z;W:M6 6Q10 3 14 6Q10 9 6 6Z;y:M7 11H9M11 11H13M8 15H12",
        t3d: "w~1,11,9,3D;b:M8 3L18 9L10 16;B:*18,9*10,16*2,16", t3a: "w~5,17,8,3D;w:M4 17Q10 -12 16 17;B:*4,16*16,16*7,4*13,4", t3s: "w~1,17,8,3D;b:M17 3Q10 3 12 8Q17 12 12 17",
        un1: "G:@12,7,6;s:#3,8,8,9;G:#3,10,8,8", un2: "g:@11,8,6;g:#4,6,8,12;G:#6,8,5,8", slice: "w:@10,10,6;w:M4 5L14 17M6 4L16 15;b:M5 5L15 16", blank: "G:#2,2,16,16;e:#5,5,4,10;e:#11,8,4,4", bAdd: "T:@13,7,6;T:#2,7,11,12;c:@13,7,6;c:#2,7,11,12", bInt: "t:#3,7,10,11;w:@13,7,5;c:@13,7,5;T:M8 8H13V12Q9 12 8 8Z", bSub: "T:#2,7,11,12;E:@13,7,5;w:@13,7,5",
        cp1: "g:#4,3,8,12;g:#7,6,8,12;g:#6,5,8,12", cp2: "g:#3,3,6,6;g:#11,3,6,6;g:#3,11,6,6;g:#11,11,6,6", cp3: "g:@10,5,3;g:@5,10,3;g:@15,10,3;g:@10,15,3", mir: "g:M3 3V17H9M3 3L8 10V17;G:M17 2V18H11Q15 14 15 2Z", tri: "g:M11 10L17 10L12 3ZM4 18V12L9 18Z", feet: "G:M4 3Q8 3 8 9Q6 12 4 9ZM6 12L9 12V15H7ZM12 5Q16 4 17 9Q15 13 13 11ZM13 14L16 13V17H14Z",
        e1: "w:M3 14L14 3;b:M3 17L17 5M7 18L18 9", e2: "w:M2 10H18M6 14L13 4;b:M9 11V17", e3: "r:M3 3L8 8M4 13L8 17M2 17L8 12;w:M17 3L12 8M11 4V8H16", e4: "r:M4 15Q1 3 10 3Q16 3 17 9;w:M17 9Q17 16 11 18;g:M9 11L17 4", e5: "r:M3 3L12 11;w:M17 18L11 11L3 18", e6: "w:M3 8L12 18M8 4L17 14;r:M3 5L13 16M6 8L15 17", e7: "D:#3,3,9,9;w:#9,9,8,8;b:#11,11,4,4", e8: "w:M4 6V16L8 11M12 14L16 3;b:M5 17L14 14L17 6", e9: "r:@10,10,7;w:M10 17Q17 16 17 9", e10: "r:M3 3L16 8M3 3L8 17;w:M8 17L6 12", e11: "w:#3,8,11,9;n:@14,7,4;r:M4 17H14",
        e12: "r:M3 2V10Q4 17 10 17;w:M10 17H17", e13: "r:M4 14L13 3M6 14L14 5;b:M8 16H16M13 8V17M15 10L17 14", e14: "g:#4,7,12,10;g:#6,10,6,4;w:M10 12V4M8 6L10 3L13 6", e15: "g:M4 17V9L10 13L17 3M4 4L10 8;G:*4,17*4,4*10,13*17,3", e16: "g:M3 16Q5 4 10 4Q15 4 17 16", e17: "g:M3 10L11 3M3 13L16 4M9 9L17 17M5 14L3 18", e18: "g:M8 2V8H2M12 2V8H18M8 18V12H2M12 18V12H18", e19: "W:#6,2,8,16;R:@5,10,3;R:@15,10,3;R:#8,4,4,12", e20: "w:#2,2,7,7;r:#9,11,8,7;n:M10 5Q16 5 15 10", e21: "r:@10,10,7;s:M3 7H17M3 13H17;r:M3 10H17",
        sel: "W:M6 2V16L9 13L12 18L14 17L11 12H16Z;k:M7 4V14L9 12L12 16", node: "b:M2 13Q5 5 11 2;B:#5,5,5,5;W:M10 7V18L13 15L15 19L17 18L15 14H18Z", tInt: "g:M2 4L18 16;b:M6 16L14 5;W:*3,16*17,3", tLine: "w:M3 17L17 3;B:*3,17*17,3", tCirc: "w:@10,10,8;B:*10,10*18,10", tCurve: "w:M3 17Q4 5 10 5Q16 5 17 17;B:*3,17*17,17*5,4*15,4", tDot: "W:@10,10,3", tText: "w~2,17,19,A", tObj: "B:#7,9,12,10;w:#2,2,8,8;r:M10 6Q16 8 11 14",
        tDim: "g:M2 3H18M2 17H18M10 4V16M7 7L10 4L13 7M7 13L10 16L13 13M3 10H17M5 8L3 10L5 12M15 8L17 10L15 12", redgear: "R:@10,10,7;R:*10,2*10,18*2,10*18,10*4,4*16,4*4,16*16,16;w:@10,10,3", selwin: "W:#0,1,20,18;B:#1,1,18,3;E:#2,5,16,13;W:*5,8*13,8*5,15*14,15;b:#7,9,7,5", tiles: "W:#4,3,5,6;W:#11,3,5,6;W:#4,11,5,6;W:#11,11,5,6;t:M6 5V7M13 5V7;r:M6 13V15M13 13V15", newvp: "w:#5,7,13,12;w:@12,13,4;w:M12 9V17M8 13H16;y:M5 0V9M1 4H9M2 1L8 8M8 1L2 8",
        globe: "V:@10,10,9;N:M5 3Q10 -1 16 4L12 9L6 9Z;W:M9 10L18 8V11L11 13Z;K:M15 13L18 11L17 16Z", swiss: "K:#0,0,20,20;R:M1 18V12L5 9L9 12V18Z;w:M2 2L9 6M9 4L14 11M12 3H17M16 3V12;D:#12,10,6,6",
        lRef: "E:#1,1,18,18;g:#1,1,18,18;n:M6 9Q7 5 11 6M14 11Q13 15 9 14;N:M11 3L15 7L10 8ZM9 17L5 13L10 12Z", lFil: "w:M1 8H11L7 13V17L5 15V13Z;b:M16 2V8M13 5H19M14 3L18 7M18 3L14 7M16 11V17M13 14H19M14 12L18 16M18 12L14 16", lFilG: "g:M2 8H10L7 12V17L5 15V12ZM9 6L14 2H19V6L14 7", lStack: "Y:#5,0,14,9;r:#7,2,8,5;R:#8,3,7,4;V:M2 10H14L11 13H0ZM4 13H10V15Z;W:M3 12H12L10 16H1Z;k:M1 15H9", lTpl: "w:M5 3H3V9L1 10L3 11V17H5M15 3H17V9L19 10L17 11V17H15;b:M8 4V10M5 7H11M6 5L10 9M10 5L6 9M13 10V16M10 13H16M11 11L15 15M15 11L11 15",
        lNew: "y:M4 1V9M0 5H8M1 2L7 8M7 2L1 8;Y:@4,5,3;b:@14,14,3;b:M14 9V19M9 14H19M10 10L18 18M18 10L10 18", lDel: "G:M2 1L7 1L10 6L13 1H18L13 9L18 18H13L10 13L6 18H1L7 9Z", lOk: "N:M1 10L4 8L7 12L18 2L19 5L7 17Z", lSel: "b:@7,7,3;b:M7 1V13M1 7H13M2 2L12 12M12 2L2 12;W:M11 9V19L14 16L16 19L18 18L16 15H19Z", lProp: "w:#1,6,14,12;w:M3 10H6M3 13H6M8 10H13M8 13H13M3 16H12;S:M5 5L9 1H16V6L10 8Z;B:#16,1,3,7", lEye2: "Y:M3 5Q10 0 17 5Q10 9 3 5ZM3 14Q10 9 17 14Q10 19 3 14Z;K:@10,5,2;K:@10,14,2;w:M3 5H5M15 5H17M3 14H5M15 14H17", lEyeB: "W:#5,1,9,8;K:M6 2H13L6 8Z;Y:M3 14Q10 9 17 14Q10 19 3 14Z;K:@10,14,2", lEye1: "Y:M1 10Q10 3 19 10Q10 17 1 10Z;K:@10,10,3",
        stackW: "W:#0,0,20,20;k:M2 5L8 2L17 5L11 8ZM3 9L12 11H17M3 13L12 15H17;" + STACK, stackK: "K:#0,0,20,20;" + STACK, tplW: "W:#0,0,20,20;k:M5 2H3V18H5M15 2H17V18H15;N:M6 5L10 3L11 8Z;Y:M8 9L13 8L12 13Z;R:M10 13L14 13V17Z;k:M7 4L13 16", filW: "W:#0,0,20,20;G:M4 4L10 1L18 4L12 8Z;K:M1 8H12L8 13V18L5 16V13Z;k:M10 10H18M11 13H18M11 16H19",
        cCheck: "K:#0,0,20,20;w:M3 10L8 16L17 4;n:M4 9L8 14L16 4", check: "w:M3 10L8 16L17 4;n:M4 9L8 14L16 4", eye: "W:M0 10Q10 1 20 10Q10 19 0 10Z;B:@10,10,4;V:@10,10,3;W:*11,9", cEye: "K:#0,0,20,20;W:M1 10Q10 2 19 10Q10 18 1 10Z;V:@10,10,4;W:*11,9", cLock: "K:#0,0,20,20;w:#4,9,12,8;w:M5 9V6Q10 0 15 6V9M6 12H14M6 14H14", cPal: "K:#0,0,20,20;Y:@10,10,7;R:@7,7,2;N:@13,6,1;V:@14,11,2;K:@9,13,2;W:@7,11,1",
        pEnd: "w:M2 10H10M8 7L11 10L8 13;R:*14,10*17,10", pMid: "g:M16 3L6 12M8 8L17 17;R:*11,9", pDiv: "w:M2 18L18 2;r:*7,13*13,7*10,10", pArc: "w:M4 15Q0 4 10 3Q20 4 16 15;R:*10,10", pBox: "w:#3,6,11,11;w:M3 6L6 3H17V14L14 17M14 6L17 3;r:#7,9,4,5", pQuad: "w:@10,10,7;g:M10 3V17M3 10H17;r:*10,3*10,17*3,10*17,10*10,10", pX: "w:M3 3L17 17M17 3L3 17;R:*10,10", pGrid: "G:*3,3*8,3*13,3*3,8*8,8*13,8*3,13*8,13*13,13;R:*17,17", pNear: "g:M4 9L10 3M9 8L17 17;r:#3,5,5,5;g:M3 10L8 15", pFace: "w:M3 17L5 4H15L17 17Z;r:@10,12,2", pTan: "w:M2 12Q8 4 17 4M8 8L15 17;R:*8,8", pPerp: "r:M10 2V16;w:M2 17H18", pCross: "r:M10 2V18;w:M2 10H18", pStar: "w:M10 2V18M2 10H18M4 4L16 16M16 4L4 16;R:*17,3", pTri: "G:M3 16L10 3L17 13V17H3Z;R:@10,11,3", pMag: "w:M4 13V8Q10 -3 16 8V13H13V9Q10 3 7 9V13Z;r:M6 18L9 13M14 18L11 13", pExt: "g:M4 17V3H10;r:M8 4L14 10;w:M10 9L17 17M10 9V13", pApp: "g:M3 17L9 5M11 5L17 17;r:M6 14L10 5L14 14", pDash: "g:M6 14L15 5;W:*3,17*17,3",
        l1: "w:M4 16L16 4;B:*4,16*16,4", l2: "w:M3 9L9 3L14 8L8 14M10 17L15 12;B:*9,3*3,9*10,17", l3: "w:M7 2H13L18 7V13L13 18H7L2 13V7Z;B:*10,10*3,4", l4: "w:M4 3L17 8L9 16Z;B:*9,16*4,3*17,8", l5: "w:#3,3,14,14;B:*3,3*17,17", l6: "w:M10 2L17 9L9 17L2 10Z;B:*10,17*17,14", l7: "w:M3 11L11 3M8 6L16 16;B:*16,16", l8: "w:M2 14L13 3M6 17L17 6;B:*7,14*14,6", l9: "w:@9,11,6;w:M6 3L18 9;B:*17,10", l10: "w:M4 3Q13 4 11 10Q9 15 3 17;w:M10 8L17 15;r:M9 5L13 9;R:*17,16",
        l12: "w:M3 3Q11 3 9 10M7 8Q18 8 16 16L9 17;B:*4,6*9,10", l13: "w:M10 3V14M3 14H8L17 10", l14: "w:M10 3V16M5 12L10 17L15 12;B:*10,4*10,17", l15: "w:M3 17L17 2M4 18L18 3;B:*3,10*9,5*17,9*12,15*5,17",
        c1: "w:@10,10,7;B:*10,10*17,10", c2: "w:@10,10,8;w:@10,10,5;w:@10,10,3;B:*10,10*17,10", c3: "w:@10,10,7;B:*3,10*17,10", c4: "w:M16 6Q9 3 7 10Q8 18 16 15M3 6L12 3;B:*6,4", c5: "w:M3 3H17;w:@10,10,6;w:M10 6V16;B:*10,16*4,4", c6: "w:@10,10,7;B:*4,5*16,5*10,17", c7: "w:@10,10,5;w:M3 4L8 8M17 4L12 8M3 8H6M14 8H17;B:*6,14*14,14*10,4", c8: "w:@10,8,4;w:M7 12V18M13 12V18;B:*10,3*10,13", c9: "s:M3 10Q4 5 10 5Q17 5 17 10Q16 15 10 15Q3 15 3 10Z;B:*17,10", c10: "s:M4 15Q3 6 16 4Q17 15 4 15Z;s:M7 12L13 7", c11: "w:M3 14Q4 9 10 9Q17 9 17 14Q16 18 10 18Q3 18 3 14Z;b:@10,4,2", c12: "w:@10,10,7;w:@10,10,6;B:*3,3*16,6*17,17",
        a1: "w:M3 14Q0 4 10 3Q17 4 18 9H10L7 12V16H3;B:*10,10*4,15", a2: "w:M3 16Q0 3 10 3Q18 3 18 10M6 14Q4 7 10 6Q15 7 15 10M8 12Q9 8 12 10;B:*17,11", a3: "w:M3 10Q4 17 10 17Q17 16 17 6L11 10Z;B:*17,4*4,9", a4: "w:M3 17L17 3M8 6Q3 9 8 12M10 14Q15 17 16 12M12 9L16 15;B:*14,15", a5: "w:M4 4Q16 1 17 10Q16 18 5 17M8 8H12V12H8;B:*4,4*5,17*10,10", a7: "w:M5 6Q10 2 15 6M5 13Q10 18 15 13M5 9V11M15 9V11;B:*5,5*15,5*10,16*3,9", a8: "w:@10,9,5;w:M10 5V18M6 12L10 8L14 12;B:*10,9*15,16", a11: "w:M3 6H17M4 7Q5 16 10 16Q16 16 17 7;b:M5 4L8 8M15 4L12 8;B:*3,5*17,5", a13: "w:M4 17Q2 8 10 8Q18 8 16 17;b:M7 2V5M10 2V5M13 2V5",
        u2: "w:M4 15Q15 18 10 10Q6 3 17 4;B:*4,15*17,4", u3: "w:M3 17Q5 4 10 4Q15 4 17 17;B:*3,17*17,17", u4: "w:M5 14Q1 4 10 3Q18 4 17 11Q15 17 9 16Q5 12 9 8Q13 7 13 11L11 12", u5: "b:M5 14Q1 4 10 3Q18 4 17 11Q15 17 9 16Q5 12 9 8Q13 7 13 11;Y:*4,12*11,10", u6: "w:M6 10Q3 3 10 3Q17 3 14 10Q20 17 12 17H8Q0 17 6 10Z", u7: "w:M3 17L6 5L10 12L17 3M4 17L12 17;W:*3,17*6,5*11,16*17,3",
        d1: "w:M4 14L14 3M7 17L17 6;b:M4 14L7 17M14 3L17 6", d2: "w:M2 13L10 5L18 13M4 16L10 10L16 16;B:*10,6*3,14*17,14", d3: "w:@10,10,8;w:@10,10,5;B:*10,10", d4: "w:M3 3H10L17 10V17H10L3 10Z;b:M6 6L14 8V14L7 12Z", d5: "w:#2,3,16,14;w:#6,7,8,6", d6: "w:M10 2L18 10L9 18L2 10ZM10 6L14 10L9 14L6 10Z;B:*10,2*17,15", d7: "w:M2 10L10 2M5 10L15 18M8 7L17 16", d8: "w:M2 13L11 4M5 15L15 5M8 17L18 7",
        m2: "w:M3 8L7 4L17 14L13 18Z;b:M3 8L5 6", m3: "w:M3 12L11 3M9 17L17 8M6 8L13 12M12 9V13H8", m4: "g:M3 10L8 5L15 10L10 15Z;w:M9 4L17 12M17 8V12H13", m5: "G:#10,3,7,4;G:#13,3,4,14;g:M3 8H9M3 12H9M3 16H12", m6: "w:M3 17V3H17V17M6 8H14M6 12H12V16M6 5H16", m7: "g:M3 3V17M8 5V17M13 5V17M17 3V17M3 4H17", m8: "w:M4 3V17M10 3V17M16 3V17M2 12H18M7 10L4 12L7 14", m9: "w:M4 3V17H17M5 6Q14 7 14 16;b~12,8,8,A", m10: "w:@8,12,6;R:*8,12;b~13,7,8,R", m11: "w:@8,12,6;R:*8,12;b~13,7,8,D", m12: "w:M5 4H18L15 10H6M3 17L9 12M3 13V17H7;g:M8 7H15", m14: "g~5,15,13,Q", m15: "w:#3,3,14,13;w:M3 16L17 3M3 17L8 18", m16: "w:M3 4V17M3 5H18V10H3;R:#3,5,4,5",
        tabT: "W:#0,1,20,18;B:#1,1,18,3;E:#2,5,16,13;W:M4 7L9 11L15 6L12 12H8Z;R:#7,12,6,6", tabS: "W:#0,1,20,18;B:#1,1,18,3;E:#2,5,16,13;W:M8 6V16L10 14L12 17L13 13H15Z", tabL: "W:#0,1,20,18;B:#1,1,18,3;E:#2,5,16,13;V:#4,9,2,8;Y:#8,7,3,10;R:#13,8,3,9",
        list: "w:#1,3,18,15;w:M4 7H6M8 7H16M4 11H6M8 11H16M4 14H6M8 14H16", xg: "g:M4 3L16 17M16 3L4 17M5 3L17 17M17 4L5 17", tbl: "g:#2,3,16,15;G:#2,3,16,4;g:M4 9H16M4 12H16M4 15H16M8 8V17M12 8V17", mdl: "S:@12,13,5;w:M4 8V3L10 2L14 5V8M4 8L8 11V4L4 3", lay: "W:M4 1H12L16 5V19H4Z;k:M8 9L10 7V15",
        rScale: "R:M10 2L17 8H13Z;s:M5 15L13 7M6 17L15 8;B:#1,13,5,5", rWin: "G:#2,3,16,14;e:M2 7H18;e:#6,10,8,4", rHatch: "g:#2,2,7,8;g:M2 6L6 2M2 10L9 3;g:#11,10,7,8;g:M11 18L18 10M12 4H17V8", target: "n:@10,10,9;y:@10,10,8;b:@10,10,4;w:M10 5V15M5 10H15;b:M7 7L13 13M13 7L7 13", rPts: "W:#1,2,9,5;s:M6 17L16 7;b:#4,15,4,4;b:#14,5,4,4",
        i1: "w:#3,10,6,8;w:M5 8L10 2H17V7L12 9M12 3V7", i2: "w:#2,3,6,7;w:M8 14L16 3;w:#9,11,7,6;w:M9 11L12 8H18V14L16 17", i3: "w:M2 12Q7 3 14 9;b:M3 13L9 6;W:M12 8V18L14 16L17 19V12Z", i4: "T:#3,3,14,14;N:M4 4H16V16Z;w:#3,3,14,14", i5: "T:M3 4V17H17Z;w:M3 4V17H17Z;w:@13,5,3;W:#11,3,6,3", i6: "N:M3 4V17H15Z;w:M3 4V17H15;w:@12,5,3;W:#9,3,6,3", i7: "T:#3,4,8,8;n:M11 4H3V12H8V17H14;W:#12,3,5,4", i8: "n:M3 7Q10 1 14 8M3 4V9H8;W:M9 8V18L12 15L14 18L15 13H17Z", i9: "R:M5 3L11 8L6 9Z;r:M2 2L13 12;g:M3 3H14;B:M16 10V18H10Z;Y:*4,9*4,4", i10: "w:M4 15L8 4L12 15Z;r:M10 16L14 6L18 16Z;D:#10,14,8,3", i11: "g:M3 11H17L15 17H5ZM8 3H12V11H8Z;G:#6,13,8,3", i12: "w:#4,3,12,14;r:M3 18L17 2M4 18L18 3;b:#8,10,6,6;W:*3,3*17,3*3,17*17,17", i13: "g:#3,3,14,14;G:*3,3*10,3*17,3*3,10*10,10*17,10*3,17*10,17*17,17", i14: "g:M4 7V17H13V11M4 7H9;g:M8 13L17 4;G:*4,7*13,17*4,17*17,4*9,11",
      };

      function draw(name) {
        return (ICONS[name] || "").split(";").map((part) => {
          const color = COLORS[part[0].toLowerCase()];
          if (part[1] === "~") {
            const [x, y, size, text] = part.slice(2).split(",");
            const family = name === "tText" ? "Liberation Serif" : "Liberation Sans";
            return `<text x="${x}" y="${y}" font-size="${size}" font-weight="bold" font-family="${family}" fill="${color}">${text}</text>`;
          }
          const d = part.slice(2)
            .replace(/@(\d+),(\d+),(\d+)/g, (m, x, y, r) => `M${x - r} ${y}a${r} ${r} 0 1 0 ${2 * r} 0a${r} ${r} 0 1 0 ${-2 * r} 0`)
            .replace(/#(\d+),(\d+),(\d+),(\d+)/g, "M$1 $2h$3v$4h-$3z")
            .replace(/\*(\d+),(\d+)/g, (m, x, y) => `M${x - 1.5} ${y - 1.5}h3v3h-3z`);
          const fill = part[0] < "a";
          return `<path d="${d}" fill="${fill ? color : "none"}" ${fill ? "" : `stroke="${color}" stroke-width="1.2"`}/>`;
        }).join("");
      }

      function icon(name, cls) {
        return `<svg viewBox="0 0 20 20" class="${cls}">${draw(name)}</svg>`;
      }

      // Toolbar frames
      document.querySelectorAll("[data-bar]").forEach((bar) => {
        bar.className = "flex h-[31px] shrink-0 items-center border-l border-t border-[#828282] bg-[#4a4a4a] pr-0.5";
        bar.insertAdjacentHTML("afterbegin", '<span class="ml-[5px] mr-0.5 h-5 border-l-2 border-dotted border-[#7c7c7c]"></span>');
      });

      // Toolbar buttons: "name" plus ! for pressed and ^ for a flyout
      document.querySelectorAll("[data-icons]").forEach((box) => {
        const vertical = box.hasAttribute("data-vertical");
        box.className = vertical ? "flex flex-col" : "flex items-center";
        box.innerHTML = box.dataset.icons.trim().split(/\s+/).map((token) => {
          if (token === "|") {
            return vertical
              ? '<span class="mx-1 mt-[3px] mb-0.5 border-t border-[#969696]"></span>'
              : '<span class="ml-[3px] mr-0.5 h-6 border-l border-[#1c1c1c]"></span>';
          }
          const name = token.replace(/[!^]/g, "");
          const pressed = token.includes("!") ? "bg-[#667fa6]" : "";
          const fly = token.includes("^") ? icon("fly", "absolute -right-px bottom-0 size-1.5") : "";
          return `<button aria-label="${name}" class="relative flex size-7 shrink-0 items-center justify-center ${pressed}">${icon(name, "size-5")}${fly}</button>`;
        }).join("");
      });

      document.querySelectorAll("svg[data-icon]").forEach((svg) => {
        svg.innerHTML = draw(svg.dataset.icon);
      });

      document.querySelectorAll("[data-combo]").forEach((box) => {
        const fill = box.hasAttribute("data-fill") ? '<span class="absolute inset-y-[3px] left-[3px] right-5 bg-[#787878]"></span>' : "";
        box.innerHTML = `<select aria-label="${box.dataset.combo}" class="h-full w-full appearance-none border border-[#999] bg-[#4a4a4a]"></select>${fill}
          <svg viewBox="0 0 20 20" class="pointer-events-none absolute top-2 right-1 size-2.5"><path d="M2 5H18L10 16Z" fill="#a0a0a0"/></svg>`;
      });

      // Smooth curve through the listed points
      document.querySelectorAll("[data-curve]").forEach((path) => {
        const p = path.dataset.curve.split(" ").map((s) => s.split(",").map(Number));
        let d = `M${p[0]}`;
        for (let i = 0; i < p.length - 1; i++) {
          const [a, b, c, e] = [p[i - 1] || p[i], p[i], p[i + 1], p[i + 2] || p[i + 1]];
          d += `C${b[0] + (c[0] - a[0]) / 6} ${b[1] + (c[1] - a[1]) / 6} ${c[0] - (e[0] - b[0]) / 6} ${c[1] - (e[1] - b[1]) / 6} ${c[0]} ${c[1]}`;
        }
        path.setAttribute("d", d);
      });

      // Palette sections
      document.querySelectorAll("[data-tools]").forEach((section) => {
        const tools = section.dataset.tools.split(" ").filter(Boolean);
        const mark = tools.length ? "M5 9L8 6L11 9M5 12L8 9L11 12" : "M5 5L8 8L11 5M5 8L8 11L11 8";
        section.innerHTML = `<div class="flex h-[25px] items-center rounded-t-sm bg-linear-to-r from-[#2a2a2b] to-[#5c6268] pl-[13px] pr-1.5">
            <h3 class="pt-0.5 text-[14px] font-bold text-[#a9bfe0]">${section.dataset.title}</h3>
            <button aria-label="Toggle ${section.dataset.title}" class="ml-auto mb-[3px]"><svg viewBox="0 0 16 16" class="size-4"><circle cx="8" cy="8" r="7" fill="#fff"/><path d="${mark}" fill="none" stroke="#6f8299"/></svg></button>
          </div>` + (tools.length ? `<div class="flex flex-wrap border border-t-0 border-[#262a2e] bg-[#373a3c] px-2.5 pt-2 pb-[7px]">${tools.map((token) => {
            const name = token.replace("!", "");
            const pressed = token.includes("!") ? "border border-[#86a5d6] bg-[#454b56]" : "";
            return `<button aria-label="${name}" class="flex size-7 items-center justify-center ${pressed}">${icon(name, "size-4")}</button>`;
          }).join("")}</div>` : "");
      });

      // Layers
      const LAYERS = [["0", "#000000", 1], ["HIDDEN", "#a50000", 0], ["1", "#000000", 1], ["2", "#22228c", 1], ["$CONSTRUCTI", "#c0d9d9", 1], ["Wręgi", "#0000ff", 1], ["Stępka", "#ff8000", 1]];
      const cell = "border-r border-b border-[#e0e0e0]";
      document.getElementById("layers").innerHTML = Array.from({ length: 38 }, (_, i) => {
        const [name, color, visible] = LAYERS[i] || [];
        return `<tr class="h-[22px]">
          <td class="overflow-hidden p-0 ${cell} ${i ? "" : "bg-[#7d95b8] text-black"}">${name ? `<span class="flex h-[21px] items-center gap-2.5 whitespace-nowrap">${icon("stackK", "size-[15px] shrink-0")}${name}</span>` : ""}</td>
          <td class="${cell}">${name && !i ? icon("check", "mx-auto size-3.5") : ""}</td>
          <td class="${cell}">${visible ? icon("eye", "mx-auto size-4") : ""}</td>
          <td class="${cell}"></td>
          <td class="p-0 ${cell}">${color ? `<span class="mx-auto block h-[19px] w-[21px] border border-[#999]" style="background:${color}"></span>` : ""}</td>
          <td class="border-b border-[#e0e0e0]"></td></tr>`;
      }).join("");

      // Inspector fields
      const FIELDS = [["Scale X", "1", 1], ["Scale Y", "1", 1], ["Size X", "0 mm"], ["Size Y", "0 mm"], ["Pos X", "0 mm"], ["Pos Y", "0 mm"], ["Delta X", "0 mm"], ["Delta Y", "0 mm"], ["Rot", "0", 1], ["Delta Distance", "0 mm"], ["Delta Angle", "0", 1]];
      document.getElementById("fields").innerHTML = FIELDS.map(([label, value, spin], i) => `<div class="w-[117px]">
          <label for="f${i}" class="block whitespace-nowrap leading-5">${label}</label>
          <div class="flex h-[26px] border border-[#999]"><input id="f${i}" value="${value}" disabled class="w-0 flex-1 px-1 text-[#757575]" />${spin ? `<span class="flex w-[21px] flex-col"><button aria-label="${label} up" class="flex flex-1 items-center justify-center border border-black"><svg viewBox="0 0 20 20" class="size-2"><path d="M3 14H17L10 5Z"/></svg></button><button aria-label="${label} down" class="flex flex-1 items-center justify-center border border-black"><svg viewBox="0 0 20 20" class="size-2"><path d="M3 6H17L10 15Z"/></svg></button></span>` : ""}</div>
        </div>`).join("");

      // Rulers: 100 mm is 144.3 px at 31% zoom
      const STEP = 14.43;
      let ticksX = "", ticksY = "";
      for (let i = -7; i < 123; i++) {
        const x = Math.round(113.8 + i * STEP);
        const major = i % 10 === 0;
        ticksX += `<path d="M${x}.5 ${major ? 2 : i % 5 ? 12 : 9}V16" stroke="#f0f0f0"/>`;
        if (major) ticksX += `<text x="${x + 2}" y="11" fill="#f0f0f0">${-900 + i * 10} mm</text>`;
      }
      for (let i = -9; i < 72; i++) {
        const y = Math.round(133 + i * STEP);
        const major = i % 10 === 0;
        ticksY += `<path d="M${major ? 2 : i % 5 ? 13 : 10} ${y}.5H16" stroke="#f0f0f0"/>`;
        if (major) ticksY += `<text transform="translate(12 ${y - 2}) rotate(-90)" fill="#f0f0f0">${2000 - i * 10} mm</text>`;
      }
      document.getElementById("rulerTop").innerHTML = ticksX + '<path d="M753.5 0V17" stroke="#3fae4a"/>';
      document.getElementById("rulerLeft").innerHTML = ticksY + '<path d="M0 812.5H16" stroke="#3fae4a"/>';
    </script>
  </body>
</html>
